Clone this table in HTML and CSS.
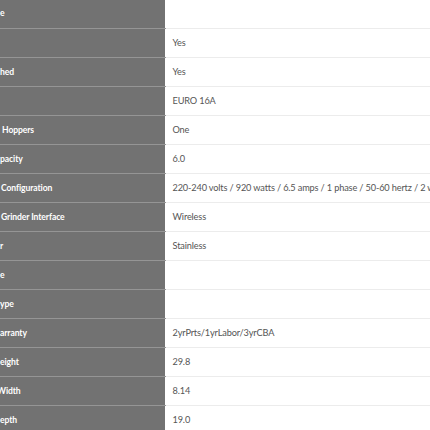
FILE: index.html
```html
<!DOCTYPE html>
<html lang="en">
<head>
  <meta charset="UTF-8">
  <meta name="viewport" content="width=device-width,initial-scale=1.0">
  <title>Specifications</title>
  <link rel="stylesheet" href="styles.css">
</head>
<body>

  <!-- Specs table, cropped on the left -->
  <table class="specs">
    <tr><th>e</th><td></td></tr>
    <tr><th></th><td>Yes</td></tr>
    <tr><th>hed</th><td>Yes</td></tr>
    <tr><th></th><td>EURO 16A</td></tr>
    <tr><th class="indent">Hoppers</th><td>One</td></tr>
    <tr><th>pacity</th><td>6.0</td></tr>
    <tr><th class="indent-sm">Configuration</th><td>220-240 volts / 920 watts / 6.5 amps / 1 phase / 50-60 hertz / 2 wire</td></tr>
    <tr><th class="indent-sm">Grinder Interface</th><td>Wireless</td></tr>
    <tr><th>r</th><td>Stainless</td></tr>
    <tr><th>e</th><td></td></tr>
    <tr><th>ype</th><td></td></tr>
    <tr><th>arranty</th><td>2yrPrts/1yrLabor/3yrCBA</td></tr>
    <tr><th>eight</th><td>29.8</td></tr>
    <tr><th class="cut">Width</th><td>8.14</td></tr>
    <tr><th>epth</th><td>19.0</td></tr>
  </table>

</body>
</html>
```

FILE: styles.css
```css
/* base */
* { margin:0; padding:0; box-sizing:border-box; }
html, body { width:430px; height:430px; overflow:hidden; background:#fff; }
body { font-family:Lato,'Noto Sans',sans-serif; font-size:9.5px; }

/* table */
.specs {
  border-collapse:collapse; table-layout:fixed;
  width:640px; margin-top:-1px;
}
.specs tr { height:29px; }
.specs th, .specs td {
  text-align:left; vertical-align:middle; white-space:nowrap;
  overflow:hidden;
}
.specs th {
  width:165px; padding-left:0;
  background:#727272; color:#fff; font-weight:bold;
  font-size:8.6px; letter-spacing:-.1px;
  border-bottom:1px solid #959595; border-right:1px solid #fff;
}
.specs td {
  padding-left:7px; color:#555;
  font-size:9.2px; letter-spacing:-.15px;
  border-bottom:1px solid #ececec;
}
.specs th.indent { padding-left:2px; }
.specs th.indent-sm { padding-left:1px; }
.specs th.cut { text-indent:-3px; }
```
